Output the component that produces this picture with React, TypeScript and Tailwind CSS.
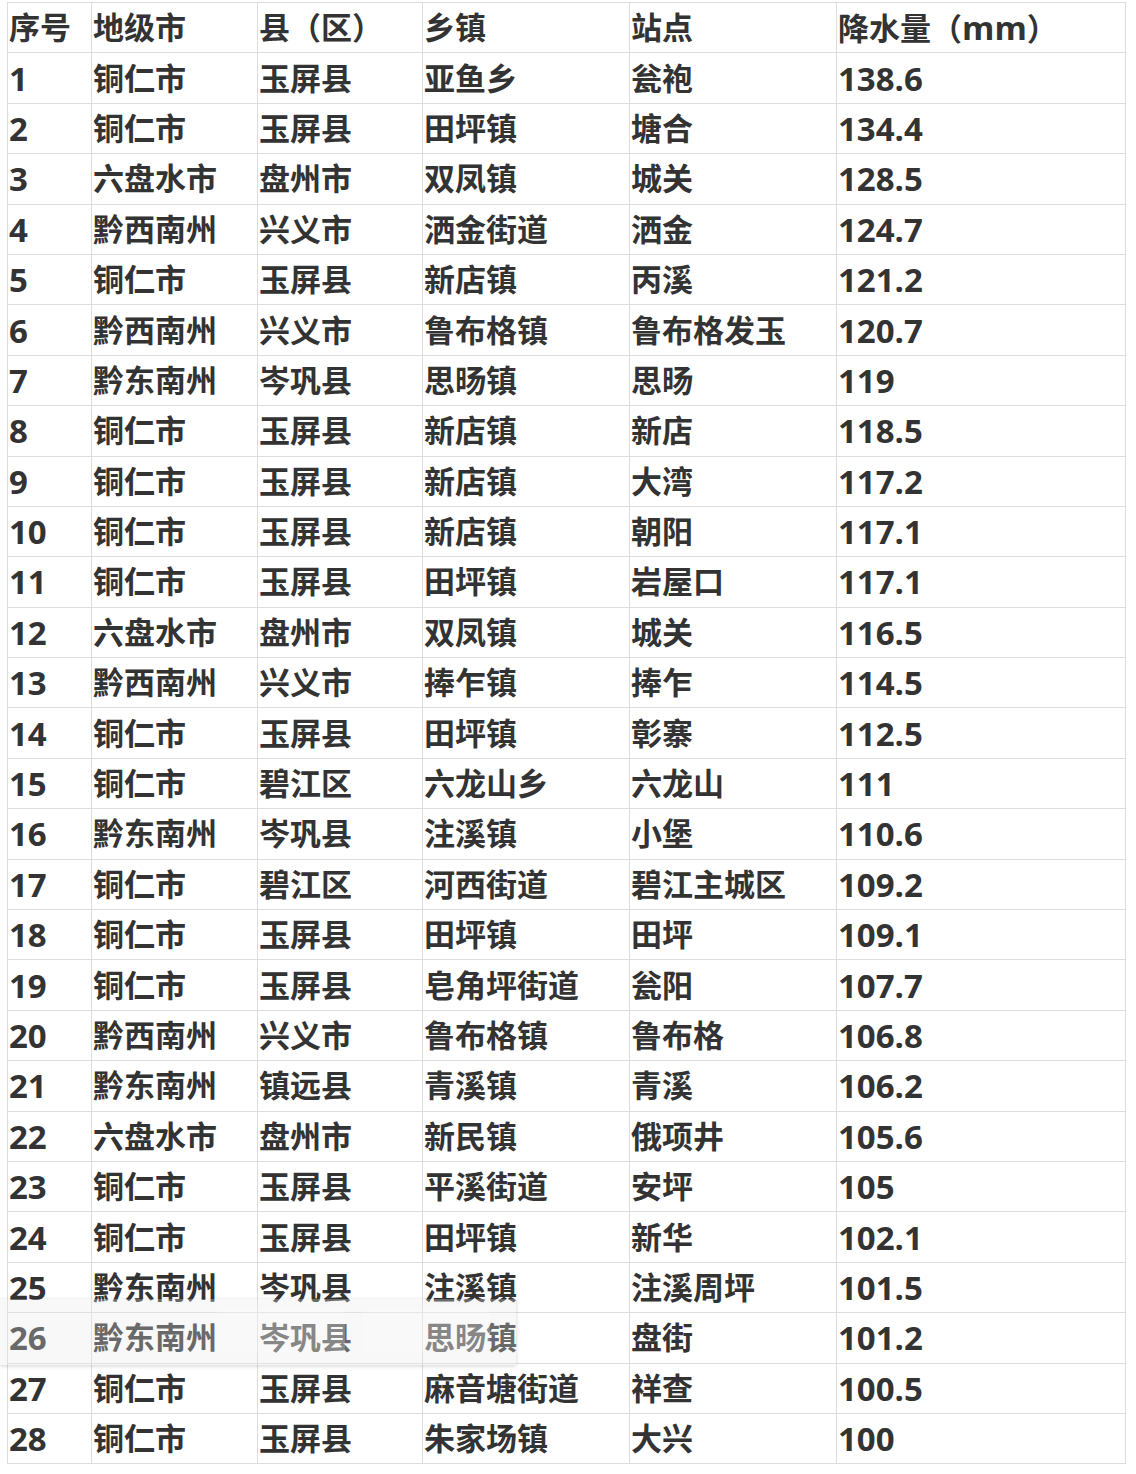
import React from 'react';

const header = ['序号', '地级市', '县（区）', '乡镇', '站点', '降水量（mm）'];

const rows: string[][] = [
  ['1', '铜仁市', '玉屏县', '亚鱼乡', '瓮袍', '138.6'],
  ['2', '铜仁市', '玉屏县', '田坪镇', '塘合', '134.4'],
  ['3', '六盘水市', '盘州市', '双凤镇', '城关', '128.5'],
  ['4', '黔西南州', '兴义市', '洒金街道', '洒金', '124.7'],
  ['5', '铜仁市', '玉屏县', '新店镇', '丙溪', '121.2'],
  ['6', '黔西南州', '兴义市', '鲁布格镇', '鲁布格发玉', '120.7'],
  ['7', '黔东南州', '岑巩县', '思旸镇', '思旸', '119'],
  ['8', '铜仁市', '玉屏县', '新店镇', '新店', '118.5'],
  ['9', '铜仁市', '玉屏县', '新店镇', '大湾', '117.2'],
  ['10', '铜仁市', '玉屏县', '新店镇', '朝阳', '117.1'],
  ['11', '铜仁市', '玉屏县', '田坪镇', '岩屋口', '117.1'],
  ['12', '六盘水市', '盘州市', '双凤镇', '城关', '116.5'],
  ['13', '黔西南州', '兴义市', '捧乍镇', '捧乍', '114.5'],
  ['14', '铜仁市', '玉屏县', '田坪镇', '彰寨', '112.5'],
  ['15', '铜仁市', '碧江区', '六龙山乡', '六龙山', '111'],
  ['16', '黔东南州', '岑巩县', '注溪镇', '小堡', '110.6'],
  ['17', '铜仁市', '碧江区', '河西街道', '碧江主城区', '109.2'],
  ['18', '铜仁市', '玉屏县', '田坪镇', '田坪', '109.1'],
  ['19', '铜仁市', '玉屏县', '皂角坪街道', '瓮阳', '107.7'],
  ['20', '黔西南州', '兴义市', '鲁布格镇', '鲁布格', '106.8'],
  ['21', '黔东南州', '镇远县', '青溪镇', '青溪', '106.2'],
  ['22', '六盘水市', '盘州市', '新民镇', '俄项井', '105.6'],
  ['23', '铜仁市', '玉屏县', '平溪街道', '安坪', '105'],
  ['24', '铜仁市', '玉屏县', '田坪镇', '新华', '102.1'],
  ['25', '黔东南州', '岑巩县', '注溪镇', '注溪周坪', '101.5'],
  ['26', '黔东南州', '岑巩县', '思旸镇', '盘街', '101.2'],
  ['27', '铜仁市', '玉屏县', '麻音塘街道', '祥查', '100.5'],
  ['28', '铜仁市', '玉屏县', '朱家场镇', '大兴', '100'],
];

const colWidths = ['w-[84px]', 'w-[166px]', 'w-[165px]', 'w-[207px]', 'w-[207px]', 'w-[289px]'];

// latin runs (digits, "mm") are drawn a bit larger, like the YaHei/Segoe mix in the shot
function CellText({ text }: { text: string }) {
  const parts = text.match(/[\x00-\x7f]+|[^\x00-\x7f]+/g) ?? [];
  return (
    <>
      {parts.map((p, i) =>
        /^[\x00-\x7f]+$/.test(p) ? (
          <span key={i} className="text-[33px]">
            {p}
          </span>
        ) : (
          <span key={i}>{p}</span>
        ),
      )}
    </>
  );
}

export default function App() {
  return (
    <div className="relative w-[1136px] h-[1474px] bg-white overflow-hidden">
      <div className="pt-[2px] pl-[7px]">
        <table
          className="table-fixed border-collapse text-[31px] font-bold leading-none text-[#333333]"
          style={{ fontFamily: '"Open Sans", "Noto Sans CJK SC", sans-serif' }}
        >
          <colgroup>
            {colWidths.map((w, i) => (
              <col key={i} className={w} />
            ))}
          </colgroup>
          <thead>
            <tr className="h-[50.4px]">
              {header.map((h, i) => (
                <th key={i} className="border border-[#dddddd] px-[1px] text-left align-middle font-bold whitespace-nowrap">
                  <CellText text={h} />
                </th>
              ))}
            </tr>
          </thead>
          <tbody>
            {rows.map((r) => (
              <tr key={r[0]} className="h-[50.4px]">
                {r.map((c, i) => (
                  <td key={i} className="border border-[#dddddd] px-[1px] align-middle whitespace-nowrap">
                    <CellText text={c} />
                  </td>
                ))}
              </tr>
            ))}
          </tbody>
        </table>
      </div>

      {/* drag ghost of row 26 lying over the table */}
      <div className="absolute left-0 top-[1299px] w-[516px] h-[66px] bg-[rgba(232,232,232,0.3)] shadow-[0_1px_4px_rgba(0,0,0,0.18)]">
        <div className="absolute left-[217px] top-[10px] w-[128px] h-[44px] bg-white/20" />
        <div className="absolute left-[362px] top-[10px] w-[128px] h-[44px] bg-white/20" />
      </div>
    </div>
  );
}
